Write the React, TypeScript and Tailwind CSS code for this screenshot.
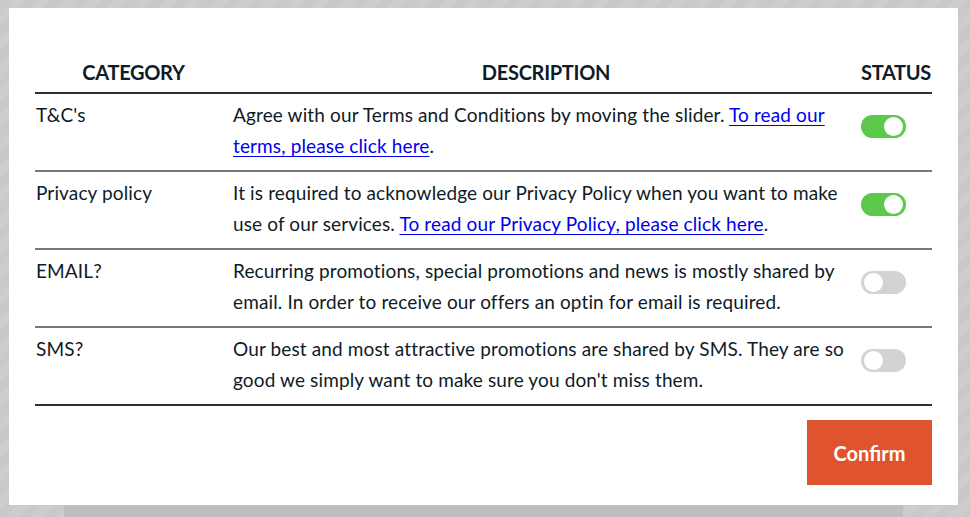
import React from "react";

const rows = [
  {
    cat: "T&C's",
    on: true,
    desc: (
      <>
        Agree with our Terms and Conditions by moving the slider.{" "}
        <a href="#" className="text-[#0000ee] underline underline-offset-[3px]">
          To read our terms, please click here
        </a>
        .
      </>
    ),
  },
  {
    cat: "Privacy policy",
    on: true,
    desc: (
      <>
        It is required to acknowledge our Privacy Policy when you want to make use of our services.{" "}
        <a href="#" className="text-[#0000ee] underline underline-offset-[3px]">
          To read our Privacy Policy, please click here
        </a>
        .
      </>
    ),
  },
  {
    cat: "EMAIL?",
    on: false,
    desc: (
      <>
        Recurring promotions, special promotions and news is mostly shared by email. In order to receive our offers an optin for email is required.
      </>
    ),
  },
  {
    cat: "SMS?",
    on: false,
    desc: (
      <>
        Our best and most attractive promotions are shared by SMS. They are so good we simply want to make sure you don't miss them.
      </>
    ),
  },
];

function Toggle({ on }: { on: boolean }) {
  return (
    <div
      className={
        on
          ? "flex h-[23px] w-[45px] items-center justify-end rounded-full bg-[#5cc94a] pr-[3px]"
          : "flex h-[23px] w-[45px] items-center justify-start rounded-full bg-[#d3d3d3] pl-[3px]"
      }
    >
      <div className="h-[19px] w-[19px] rounded-full bg-white" />
    </div>
  );
}

export default function App() {
  return (
    <div
      className="h-[517px] w-full overflow-hidden bg-[repeating-linear-gradient(135deg,#c9c9c9_0px,#c9c9c9_9px,#cdcdcd_9px,#cdcdcd_18px)] pt-[8px]"
      style={{ fontFamily: "Lato, 'Open Sans', sans-serif" }}
    >
      <div className="ml-[9px] h-[497px] w-[949px] bg-white px-[26px] pt-[52px] text-[#0f1b26]">
        <div className="grid grid-cols-[197px_628px_72px] border-b-2 border-[#26323c] text-[20px] font-bold uppercase leading-[24px] tracking-[-0.3px]">
          <div className="pb-[8px] text-center">Category</div>
          <div className="pb-[8px] text-center">Description</div>
          <div className="pb-[8px] text-center">Status</div>
        </div>
        {rows.map((r, i) => (
          <div
            key={i}
            className={
              i === rows.length - 1
                ? "grid grid-cols-[197px_628px_72px] border-b-2 border-[#26323c] text-[19px] leading-[31px] tracking-[0.13px]"
                : "grid grid-cols-[197px_628px_72px] border-b-2 border-[#74787c] text-[19px] leading-[31px] tracking-[0.13px]"
            }
          >
            <div className="pl-[1px] pt-[5px] pb-[9px]">{r.cat}</div>
            <div className="pl-[1px] pt-[5px] pb-[9px]">{r.desc}</div>
            <div className="pl-[1px] pt-[21px]">
              <Toggle on={r.on} />
            </div>
          </div>
        ))}
        <div className="flex justify-end pt-[14px]">
          <button className="h-[65px] w-[125px] bg-[#e0532f] text-[20px] font-bold text-white">
            Confirm
          </button>
        </div>
      </div>
      <div className="flex h-[12px]">
        <div className="w-[64px]" />
        <div className="w-[839px] bg-[#bebebe]" />
      </div>
    </div>
  );
}
